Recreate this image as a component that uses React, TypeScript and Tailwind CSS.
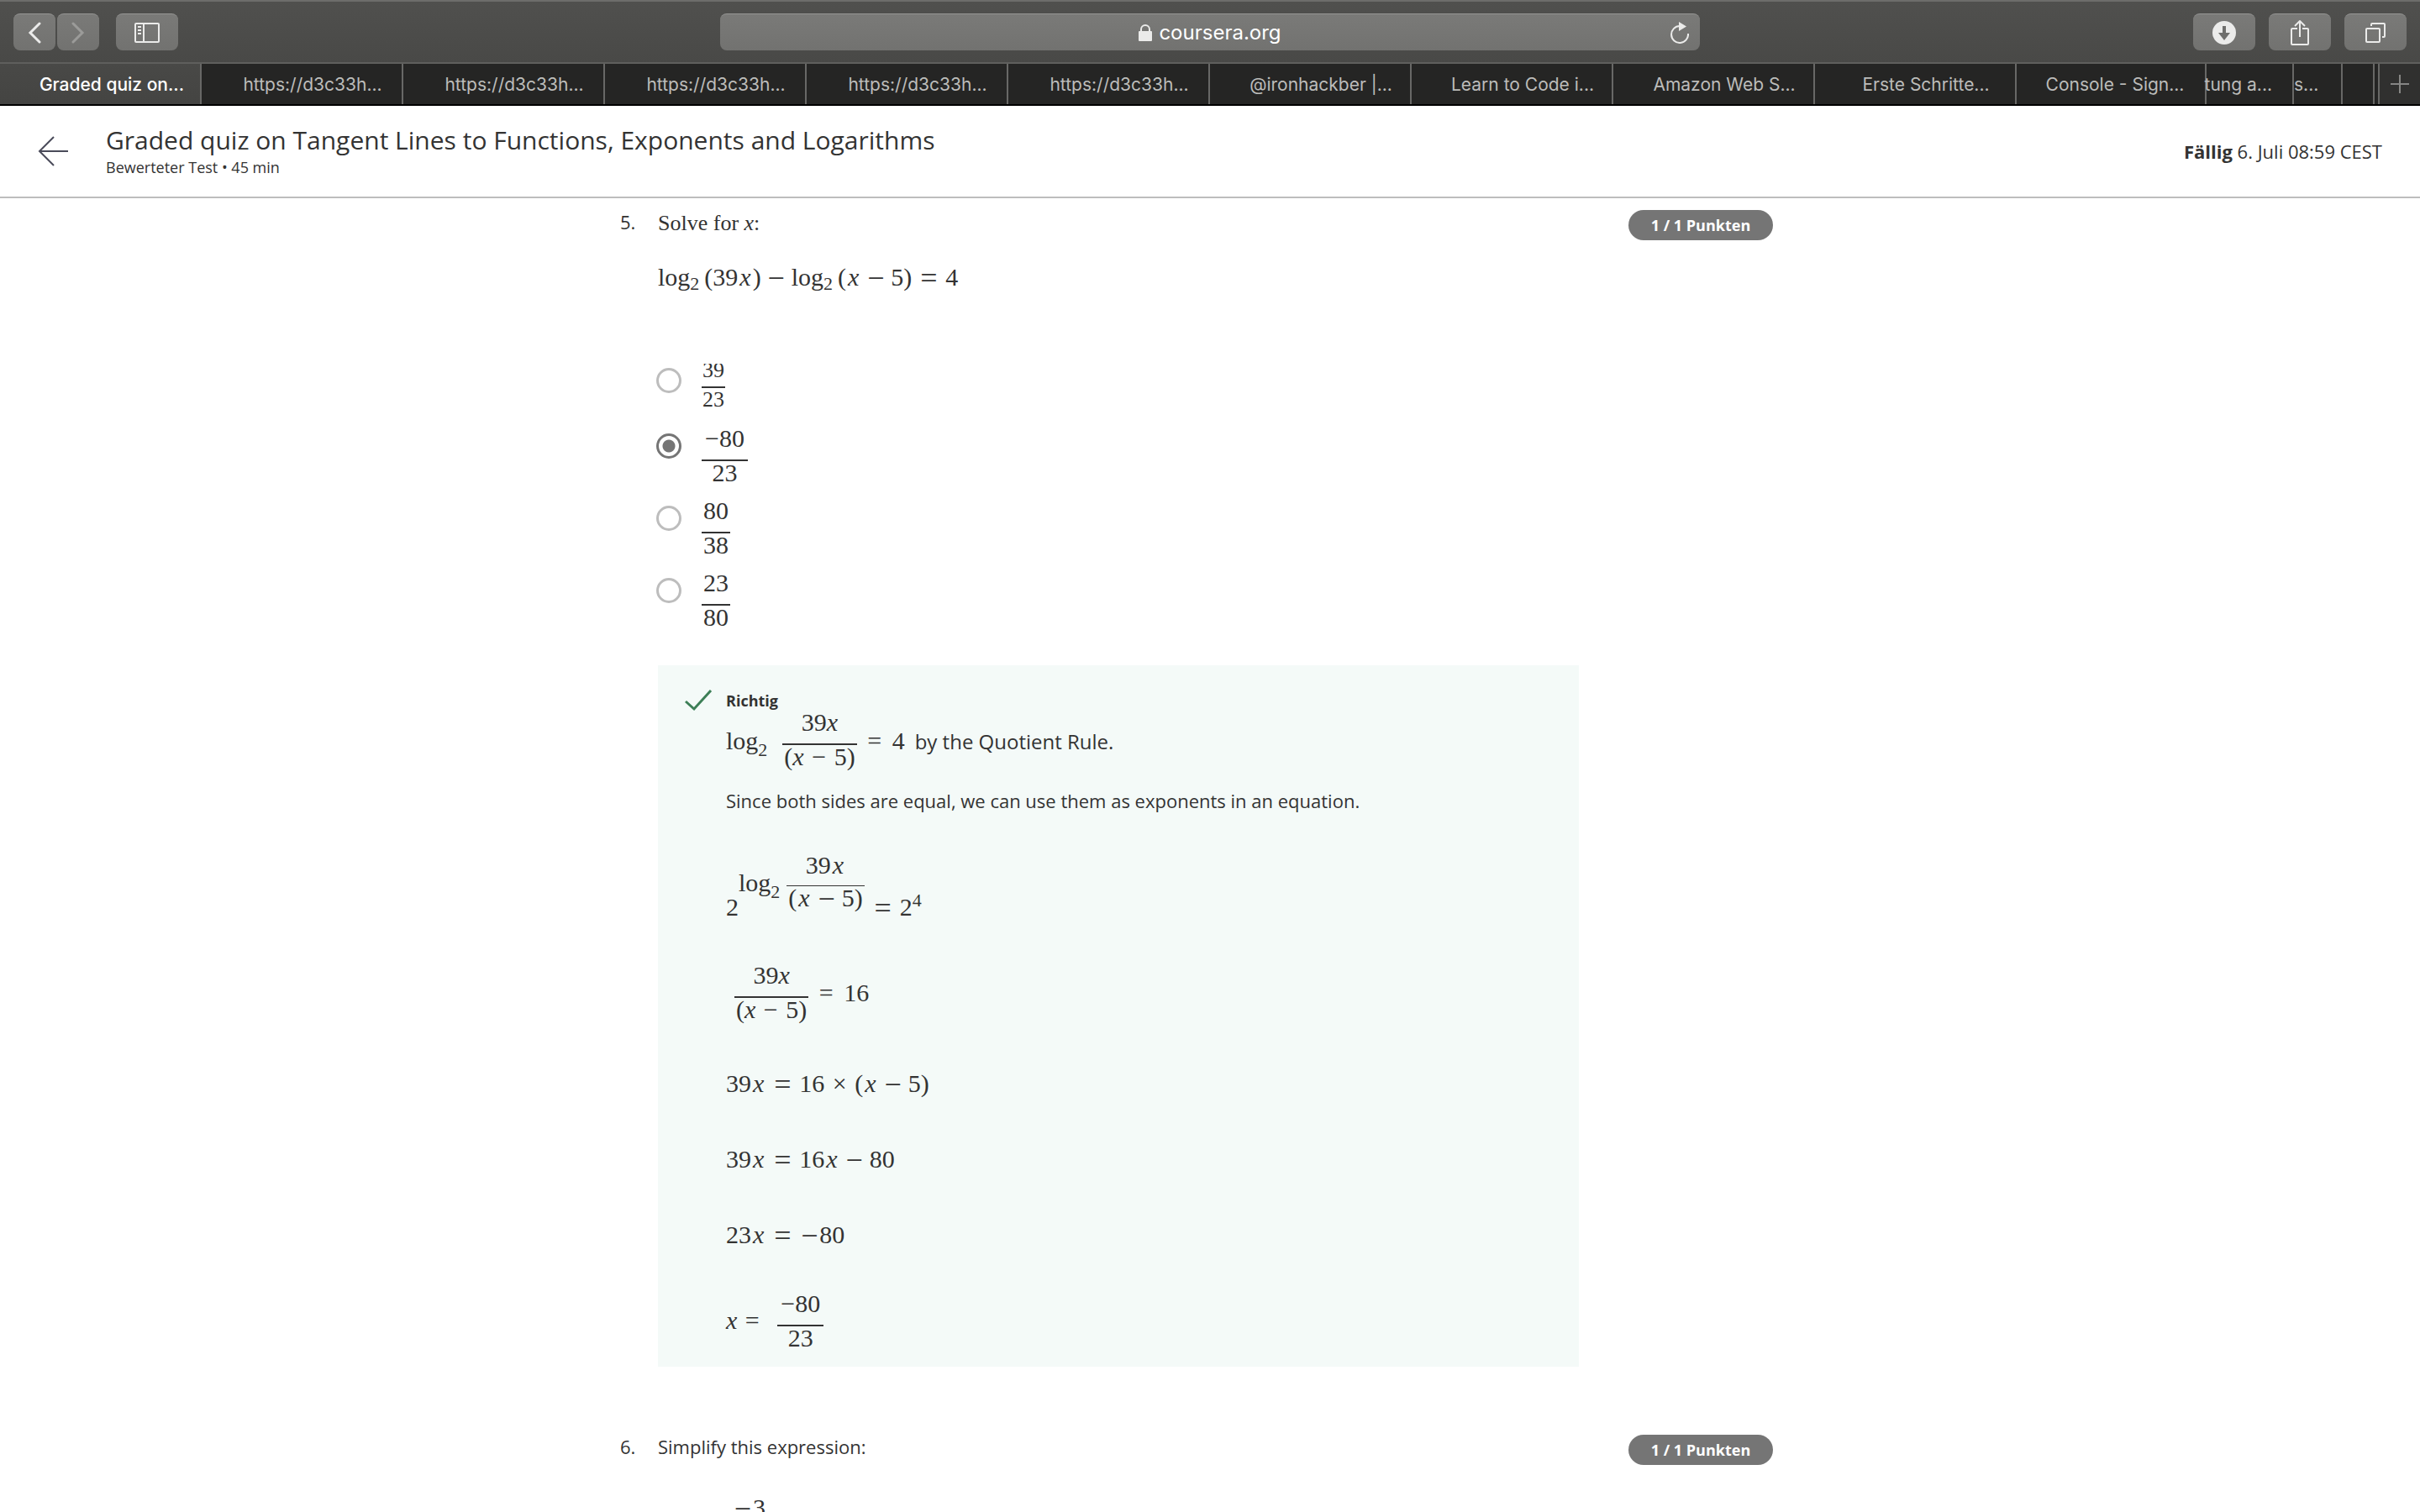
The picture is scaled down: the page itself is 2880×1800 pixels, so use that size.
import React from 'react';
import type { ReactNode } from 'react';

const tabs = [
  'https://d3c33h...',
  'https://d3c33h...',
  'https://d3c33h...',
  'https://d3c33h...',
  'https://d3c33h...',
  '@ironhackber |...',
  'Learn to Code i...',
  'Amazon Web S...',
  'Erste Schritte...',
];

function ToolButton({ label, wide, children }: { label: string; wide?: boolean; children: ReactNode }) {
  return (
    <button
      type="button"
      aria-label={label}
      className={`${wide ? 'w-[74px]' : 'w-[50px]'} flex h-11 items-center justify-center rounded-lg border-t border-[#959593] bg-linear-to-b from-[#7a7a78] to-[#727270] text-[#ebebea]`}
    >
      {children}
    </button>
  );
}

function Browser() {
  return (
    <div className="bg-linear-to-b from-[#50504e] to-[#444442] font-['Inter',sans-serif]">
      <div className="flex h-[76px] items-center justify-between border-t-2 border-b-2 border-t-[#6d6d6b] border-b-[#5f5f5d] px-4">
        <div className="flex w-[841px] gap-5">
          <div className="flex gap-0.5">
            <ToolButton label="Zurück">
              <svg width="16" height="26" viewBox="0 0 16 26" fill="none" stroke="currentColor" strokeWidth="3" strokeLinecap="round"><path d="M14 2 3 13l11 11" /></svg>
            </ToolButton>
            <ToolButton label="Vorwärts">
              <svg className="text-[#9b9b99]" width="16" height="26" viewBox="0 0 16 26" fill="none" stroke="currentColor" strokeWidth="3" strokeLinecap="round"><path d="m2 2 11 11L2 24" /></svg>
            </ToolButton>
          </div>
          <ToolButton label="Seitenleiste" wide>
            <svg width="30" height="24" viewBox="0 0 30 24" fill="none" stroke="currentColor" strokeWidth="2"><rect x="1" y="1" width="28" height="22" rx="1" /><path d="M11 1v22M4 5h4M4 9h4M4 13h4" /></svg>
          </ToolButton>
        </div>
        <div className="flex h-11 grow items-center rounded-lg border-t border-[#959593] bg-linear-to-b from-[#7a7a78] to-[#727270] px-[13px] text-white">
          <span className="w-[22px]" />
          <div className="flex grow items-center justify-center gap-2 text-2xl">
            <svg width="16" height="20" viewBox="0 0 16 20"><path d="M3 9V6a5 5 0 0 1 10 0v3" fill="none" stroke="#ebebea" strokeWidth="2" /><rect y="8" width="16" height="12" rx="1" fill="#ebebea" /></svg>
            coursera.org
          </div>
          <button type="button" aria-label="Neu laden">
            <svg width="22" height="26" viewBox="0 0 22 26"><path d="M11 5a10 10 0 1 0 10 9" fill="none" stroke="#ebebea" strokeWidth="2" /><path d="M10 0v11l9-5.5z" fill="#ebebea" /></svg>
          </button>
        </div>
        <div className="flex w-[841px] justify-end gap-4">
          <ToolButton label="Downloads" wide>
            <svg width="28" height="28" viewBox="0 0 28 28"><circle cx="14" cy="14" r="14" fill="currentColor" /><path d="M12 6h4v8h5l-7 9-7-9h5z" fill="#6f6f6d" /></svg>
          </ToolButton>
          <ToolButton label="Teilen" wide>
            <svg width="24" height="32" viewBox="0 0 24 32" fill="none" stroke="currentColor" strokeWidth="2" strokeLinejoin="round"><path d="M9 11H3q-1 0-1 1v17q0 1 1 1h18q1 0 1-1V12q0-1-1-1h-6M12 21V2M6 8l6-6 6 6" /></svg>
          </ToolButton>
          <ToolButton label="Tabübersicht" wide>
            <svg width="24" height="24" viewBox="0 0 24 24" fill="none" stroke="currentColor" strokeWidth="2"><rect x="1" y="7" width="16" height="16" rx="1" /><path d="M7 4V2q0-1 1-1h14q1 0 1 1v14q0 1-1 1h-2" /></svg>
          </ToolButton>
        </div>
      </div>
      <div className="flex h-[50px] border-b-2 border-black text-[21px] whitespace-nowrap text-[#bcbcba]">
        <button type="button" className="shrink grow basis-60 border-r-2 border-[#686866] pt-0.5 pl-7 font-medium text-white">Graded quiz on...</button>
        {tabs.map((t, i) => (
          <button key={i} type="button" className="shrink grow basis-60 border-r-2 border-[#686866] bg-[#252524] pt-0.5 pl-[26px]">{t}</button>
        ))}
        <button type="button" className="shrink grow basis-[226px] border-r-2 border-[#686866] bg-[#252524] pt-0.5 pl-2.5">Console - Sign...</button>
        <button type="button" className="flex w-[104px] items-center justify-end border-r-2 border-[#686866] bg-[#252524] pt-0.5 pr-6">tung a...</button>
        <button type="button" className="flex w-[58px] items-center border-r-2 border-[#686866] bg-[#252524] pt-0.5">s...</button>
        <span className="w-[38px] border-r-2 border-[#686866] bg-[#252524]" />
        <span className="w-[6px] border-r-2 border-[#686866] bg-[#252524]" />
        <button type="button" aria-label="Neuer Tab" className="flex w-12 items-center justify-center bg-[#30302f]">
          <svg width="22" height="22" viewBox="0 0 22 22" stroke="#868684" strokeWidth="2"><path d="M11 0v22M0 11h22" /></svg>
        </button>
      </div>
    </div>
  );
}

/* Math building blocks */

function Frac({ top, bottom, wide, thin, tight }: { top: ReactNode; bottom: ReactNode; wide?: boolean; thin?: boolean; tight?: boolean }) {
  const rule = thin ? 'border-b pb-2' : tight ? 'border-b-2 pb-[11px]' : 'border-b-2 pb-[9px]';
  const pad = wide ? 'px-1' : tight ? 'px-px' : 'px-0.5';
  return (
    <span className={`${tight ? 'text-[26px]' : 'text-[30px]'} flex shrink-0 flex-col text-center`}>
      <span className={`${rule} ${pad} ${tight ? 'leading-4' : 'leading-8'} border-[#333]`}>{top}</span>
      <span className={`${pad} leading-7`}>{bottom}</span>
    </span>
  );
}

const X = () => <i className="px-0.5">x</i>;
const Sub = ({ low }: { low?: boolean }) => (
  <sub className={`${low ? 'align-[-8px]' : 'align-[-5px]'} static text-[22px]`}>2</sub>
);
const Op = ({ children }: { children: ReactNode }) => <span className="inline-block w-9 text-center">{children}</span>;
const Minus = () => <span className="inline-block w-9 text-center align-[-3px] text-4xl leading-0">−</span>;
const Eq = () => <span className="inline-block w-10 text-center align-[-3px] text-4xl leading-0">=</span>;
const WideEq = () => <span className="inline-block w-[42px] text-center">=</span>;
const Neg = () => <span className="inline-block w-6 text-center align-[-3px] text-4xl leading-0">−</span>;

const ratio = {
  top: <>39<i>x</i></>,
  bottom: <>(<i>x</i><Op>−</Op>5)</>,
};

function Option({ top, bottom, checked, first }: { top: string; bottom: string; checked?: boolean; first?: boolean }) {
  return (
    <label className={`${first ? 'h-[73px] overflow-hidden' : 'h-[86px]'} flex items-start gap-6`}>
      <input
        type="radio"
        name="q5"
        defaultChecked={checked}
        className={`${first ? 'mt-[5px]' : 'mt-2.5'} size-[30px] shrink-0 appearance-none rounded-full border-3 border-[#bdbdbd] bg-white checked:border-[#757575] checked:bg-[radial-gradient(circle,#757575_7px,transparent_8px)]`}
      />
      <Frac top={top} bottom={bottom} wide={checked} tight={first} />
    </label>
  );
}

function Question({ number, title, children }: { number: string; title: ReactNode; children: ReactNode }) {
  return (
    <section className="flex">
      <span className="w-[45px] shrink-0 text-[22px] leading-7">{number}</span>
      <div className="grow">
        <div className="flex items-start justify-between">
          {title}
          <span className="flex h-9 w-[172px] shrink-0 items-center justify-center rounded-full bg-[#757575] text-lg font-bold text-white">1 / 1 Punkten</span>
        </div>
        {children}
      </div>
    </section>
  );
}

export default function App() {
  return (
    <div className="h-screen overflow-hidden bg-white font-['Open_Sans',sans-serif] text-[#333]">
      <Browser />
      <header className="flex h-[110px] items-center border-b-2 border-[#bdbdbd] px-[45px]">
        <a href="#" aria-label="Zurück" className="mr-11">
          <svg width="37" height="36" viewBox="0 0 37 36" fill="none" stroke="#4a4b5a" strokeWidth="2"><path d="M19 1 2 18l17 17M2 18h34" /></svg>
        </a>
        <div className="grow pb-0.5">
          <h1 className="text-[30px] leading-10">Graded quiz on Tangent Lines to Functions, Exponents and Logarithms</h1>
          <p className="text-lg leading-6">Bewerteter Test • 45 min</p>
        </div>
        <p className="text-[22px]"><b>Fällig</b> 6. Juli 08:59 CEST</p>
      </header>
      <main className="mx-auto flex max-w-[1404px] flex-col gap-[81px] pt-3.5 pr-8">
        <Question number="5." title={<p className="font-['Liberation_Serif',serif] text-[26px] leading-8">Solve for <i>x</i>:</p>}>
          <p className="mt-6 mb-[83px] font-['Liberation_Serif',serif] text-[30px] leading-10">
            log<Sub /><span className="ml-1.5">(39</span><X />)<Minus />log<Sub /><span className="ml-1.5">(</span><X /><Minus />5)<Eq />4
          </p>
          <fieldset className="-ml-0.5 font-['Liberation_Serif',serif]">
            <Option first top="39" bottom="23" />
            <Option checked top="−80" bottom="23" />
            <Option top="80" bottom="38" />
            <Option top="23" bottom="80" />
          </fieldset>
          <div className="mt-7 max-w-[1096px] bg-[#f4faf8] px-8 pt-8 pb-5">
            <div className="flex h-5 items-center gap-4 text-lg font-bold">
              <svg width="33" height="26" viewBox="0 0 33 26" fill="none" stroke="#3d7f57" strokeWidth="3"><path d="m1 14 10 9L31 1" /></svg>
              Richtig
            </div>
            <div className="pl-[49px] font-['Liberation_Serif',serif] text-[30px] leading-10">
              <div className="flex items-center">
                <span className="mr-[18px] pt-1">log<Sub low /></span>
                <Frac {...ratio} />
                <span className="pt-1">
                  <WideEq />4<span className="ml-3 font-['Open_Sans',sans-serif] text-2xl">by the Quotient Rule.</span>
                </span>
              </div>
              <p className="mt-[22px] font-['Open_Sans',sans-serif] text-[22px] leading-8">Since both sides are equal, we can use them as exponents in an equation.</p>
              <div className="mt-[45px] flex items-end">
                <span>2</span>
                <span className="mb-[17px] flex items-center gap-2">
                  <span className="pt-1">log<Sub low /></span>
                  <Frac thin top={<>39<X /></>} bottom={<>(<X /><Minus />5)</>} />
                </span>
                <span className="pl-0.5"><Eq />2<sup className="static align-[11px] text-[22px]">4</sup></span>
              </div>
              <div className="mt-[45px] flex items-center pl-2.5">
                <Frac {...ratio} />
                <span className="pt-0.5"><WideEq />16</span>
              </div>
              <p className="mt-[54px]">39<X /><Eq />16<Op>×</Op>(<X /><Minus />5)</p>
              <p className="mt-[50px]">39<X /><Eq />16<X /><Minus />80</p>
              <p className="mt-[50px]">23<X /><Eq /><Neg />80</p>
              <div className="mt-[46px] flex items-center">
                <span className="mr-3"><i>x</i><Op>=</Op></span>
                <Frac wide top="−80" bottom="23" />
              </div>
            </div>
          </div>
        </Question>
        <Question number="6." title={<p className="text-[22px] leading-7">Simplify this expression:</p>}>
          <p className="mt-[31px] pl-[89px] font-['Liberation_Serif',serif] text-[30px] leading-10"><Neg />3</p>
        </Question>
      </main>
    </div>
  );
}
